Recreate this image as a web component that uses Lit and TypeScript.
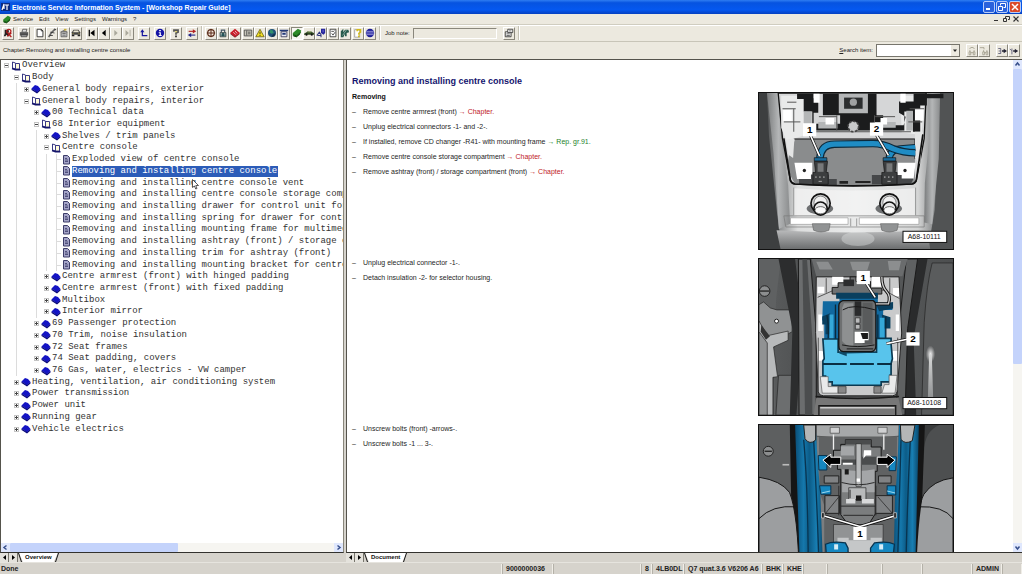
import { LitElement, html, svg, css, nothing } from "lit";
import { customElement, property } from "lit/decorators.js";
import { classMap } from "lit/directives/class-map.js";

/* Toolbar glyphs, drawn on a 12 x 12 grid. */
const glyphs: Record<string, unknown> = {
  exit: svg`<path fill="#222" d="M2 2h4l1 1v2l-1 1 2 4H6L4 8l-1 2H1l1-3z"/><circle cx="7" cy="4" r="2.5" fill="none" stroke="#b01818" stroke-width="1.4"/><path stroke="#b01818" stroke-width="1.5" d="M5 10l5-4M7 7l3 4"/>`,
  print: svg`<path fill="#555" d="M1 5h10v4H1z"/><path fill="#ddd" stroke="#333" stroke-width=".8" d="M3.5 5l1-3.500h5L8.500 5z"/><path fill="#999" stroke="#333" stroke-width=".8" d="M2.500 8h7v2.500h-7z"/>`,
  page: svg`<path fill="#fff" stroke="#222" d="M2.500 1.500h5l2 2v7h-7z"/><path fill="none" stroke="#222" d="M7.500 1.500v2h2"/>`,
  wrench: svg`<path fill="none" stroke="#666" stroke-width="2" d="M10 1L5 6 2 11"/><path stroke="#333" d="M4 5l5 1M3 9h4M9 2h2"/>`,
  home: svg`<path fill="#ccc" stroke="#555" d="M2.500 4.500h7v6h-7z"/><path fill="#777" d="M1 5l5-3 5 3z"/><path fill="#c8b040" d="M6 1h3v2H6z"/><path fill="#555" d="M4 6h4v1H4zM4 8h4v1H4z"/>`,
  car: svg`<path fill="#444" d="M1 5l2-3h6l2 3v3H1z"/><path fill="#e8e4d0" d="M3.500 3h5l1 2h-7z"/><path fill="#222" d="M1 8h3v2H1zM8 8h3v2H8z"/><path fill="#b8a830" d="M2 6h1v1H2zM9 6h1v1H9z"/>`,
  first: svg`<path fill="#000" d="M2 2h1.500v8H2zM9 2v8L4 6z"/>`,
  prev: svg`<path fill="#000" d="M8 2v8L3.500 6z"/>`,
  next: svg`<path fill="#aaa89c" d="M4 2.500v7L8 6z"/>`,
  last: svg`<path fill="#aaa89c" d="M3 2.500v7L7 6zM8 2h1v8H8z"/>`,
  back: svg`<path fill="none" stroke="#1818a0" stroke-width="1.500" d="M4 4v5h6"/><path fill="#1818a0" d="M1.500 5L4 1.500 6.500 5z"/>`,
  info: svg`<circle cx="6" cy="6" r="5" fill="#1414a4"/><path fill="#fff" d="M5 2.500h2V4H5zM4.500 5H7v3.500h1V9.500H4.500V8.500h1V6h-1z"/>`,
  help: svg`<path fill="none" stroke="#555" stroke-width="2" d="M3.500 4.500V2.500h5v2.500L6 6v2"/><path fill="#222" d="M5 9h2v2H5z"/><path fill="#d8c830" d="M5 4h2v1H5z"/>`,
  swap: svg`<path stroke="#b02020" stroke-width="1.300" d="M2 4h6"/><path fill="#b02020" d="M7 1.500L11 4 7 6.500z"/><path stroke="#222288" stroke-width="1.300" d="M4 8.500h6"/><path fill="#222288" d="M5 6L1 8.500 5 11z"/>`,
  target: svg`<circle cx="6" cy="6" r="4" fill="#f4e8dc" stroke="#5a2a18" stroke-width="1.400"/><path stroke="#5a2a18" stroke-width="1.200" d="M6 1v10M1 6h10"/>`,
  lock: svg`<path fill="none" stroke="#456" stroke-width="1.400" d="M4 5V2.500h4V5"/><path fill="#9aa" stroke="#344" d="M2.500 5.500h7v5h-7z"/><path fill="#184a50" d="M5 6h2v4H5zM3 8h6v1H3z"/>`,
  redbook: svg`<path fill="#c81c28" d="M0 6l6-5 6 5-6 5z"/><path stroke="#fff" stroke-width=".8" d="M4 5l3 3M6 3.500l2.500 3"/><path fill="none" stroke="#7a0c14" d="M0.500 7l5.500 4 5.500-4"/>`,
  panel: svg`<path fill="#c9c8bc" stroke="#444" d="M1.500 2.500h9v7h-9z"/><path stroke="#444" d="M4.500 3v6M6 5h3M6 7h3"/>`,
  warn: svg`<path fill="#f4e020" stroke="#5a5410" stroke-width=".9" d="M6 1.500L11 10.500H1z"/><path fill="#222" d="M5.500 4.500h1v3h-1zM5.500 8.500h1v1h-1z"/>`,
  globe: svg`<circle cx="6" cy="6" r="4.800" fill="#205078"/><path fill="#30906c" d="M4 2l3 1 1 3-3 1-2-2z"/><path fill="#123048" d="M7 8l3-2-1 4-4 1z"/>`,
  tray: svg`<path fill="#e8eaf4" stroke="#335" d="M2.500 4.500h7v6h-7z"/><path fill="#223a78" d="M1 2h10v2H1zM4 6h4v2H4z"/>`,
  greenbook: svg`<path fill="#2c8a28" d="M1 6l6-5 4 2-1 4-5 4-4-2z"/><path fill="none" stroke="#114a10" d="M1.500 8l4 1.500L10.500 5"/><path fill="none" stroke="#0c3a0c" d="M1.500 9.500l4 1 4-3"/>`,
  sportcar: svg`<path fill="#2f4a20" d="M0 7l3-2 2-1.500h3L10 5l2 1v2H0z"/><path fill="#c8d4a0" d="M4 5l1.500-1H8l1 1z"/><circle cx="3" cy="8" r="1.300" fill="#111"/><circle cx="9.300" cy="8" r="1.300" fill="#111"/>`,
  flag: svg`<path fill="#24249c" d="M6 1h5v5l-2 2-3-2z"/><path fill="none" stroke="#333a80" stroke-width="1.300" d="M1 9l3-4 2 3v3M2 9h4"/><path fill="#7878d8" d="M8 2h1v3H8z"/>`,
  checkpage: svg`<path fill="#fff" stroke="#333" d="M2.500 1.500h7v9h-7z"/><path fill="none" stroke="#333" d="M4 4h3l1-1M4.500 6.500l1.500 2L8.500 5"/>`,
  tools: svg`<path fill="#285a4c" d="M1 4l3-3v4l2-3h4l1 3-3 1v4H6V7l-2 4H1z"/><path stroke="#a8c8bc" stroke-width=".8" d="M3 9l5-7"/>`,
  question: svg`<path fill="#fff" stroke="#888" stroke-width=".8" d="M2 2h6v9H2z"/><path fill="none" stroke="#d4bc18" stroke-width="1.800" d="M5 4V2h4v3L7 6.500V8"/><path fill="#d4bc18" d="M6 9h2v2H6z"/>`,
  sphere: svg`<circle cx="6" cy="6" r="5" fill="#1a1a94"/><path stroke="#b8b8ec" stroke-width=".9" d="M1.500 4h9M1 6h10M1.500 8h9"/>`,
  note: svg`<path fill="#eee" stroke="#333" d="M1.500 4.500h7v6h-7z"/><path fill="#fff" stroke="#333" d="M4.500 1.500h6v4h-6z"/><path stroke="#333" stroke-width=".8" d="M3 7h4M3 9h4M6 3.500h3"/>`,
  find: svg`<path fill="none" stroke="#a09c8c" d="M3 3q3-3 6 0M3.500 5v2M8.500 5v2M2.500 7h2v3.500h-2zM7.500 7h2v3.500h-2zM4.500 8h3"/>`,
  findnext: svg`<path fill="none" stroke="#a09c8c" d="M1 2h5v2M5.500 5v2M9.500 5v2M4.500 7h2v3.500h-2zM8.500 7h2v3.500h-2zM6.500 8h2"/>`,
  textin: svg`<path stroke="#446" fill="none" stroke-width=".9" d="M1.500 3h3v6h-3M2 6h2"/><path fill="#223" d="M6 5.200h2v-2L12 6 8 8.800v-2H6z"/>`,
  textout: svg`<path stroke="#446" fill="none" stroke-width=".9" d="M1 3.500l2 2M3.500 3v7"/><path fill="#223" d="M5 5.200h2v-2L11 6 7 8.800v-2H5z"/>`,
};

const glyph = (name: string) =>
  html`<svg class="glyph" viewBox="0 0 12 12" aria-hidden="true">${glyphs[name]}</svg>`;

type Tool = [icon: string, label: string];

const mainTools: Tool[][] = [
  [["exit", "Exit"]],
  [["print", "Print"]],
  [["page", "New"], ["wrench", "Repair"], ["home", "Workshop"], ["car", "Vehicle"]],
  [["first", "First"], ["prev", "Previous"], ["next", "Next"], ["last", "Last"]],
  [["back", "Back"]],
  [["info", "Information"]],
  [["help", "Help"]],
  [["swap", "Switch"]],
];

const guideTools: Tool[] = [
  ["target", "Positions"], ["lock", "Locking"], ["redbook", "Maintenance"], ["panel", "Wiring"],
  ["warn", "Warnings"], ["globe", "Online"], ["tray", "Archive"], ["greenbook", "Repair guide"],
  ["sportcar", "Body"], ["flag", "Campaigns"], ["checkpage", "Checklist"], ["tools", "Tools"],
  ["question", "Hints"], ["sphere", "Web"],
];

type Kind = "open" | "book" | "doc";
interface Row { depth: number; kind: Kind; text: string; guides: string; selected?: boolean }

/* guides: one letter per level; "l" draws a line, "." leaves the cell blank. */
const rows: Row[] = [
  { depth: 0, kind: "open", text: "Overview", guides: "" },
  { depth: 1, kind: "open", text: "Body", guides: "." },
  { depth: 2, kind: "book", text: "General body repairs, exterior", guides: ".l" },
  { depth: 2, kind: "open", text: "General body repairs, interior", guides: ".l" },
  { depth: 3, kind: "book", text: "00 Technical data", guides: ".l." },
  { depth: 3, kind: "open", text: "68 Interior equipment", guides: ".l." },
  { depth: 4, kind: "book", text: "Shelves / trim panels", guides: ".l.l" },
  { depth: 4, kind: "open", text: "Centre console", guides: ".l.l" },
  { depth: 5, kind: "doc", text: "Exploded view of centre console", guides: ".l.ll" },
  { depth: 5, kind: "doc", text: "Removing and installing centre console", guides: ".l.ll", selected: true },
  { depth: 5, kind: "doc", text: "Removing and installing centre console vent", guides: ".l.ll" },
  { depth: 5, kind: "doc", text: "Removing and installing centre console storage comp", guides: ".l.ll" },
  { depth: 5, kind: "doc", text: "Removing and installing drawer for control unit for", guides: ".l.ll" },
  { depth: 5, kind: "doc", text: "Removing and installing spring for drawer for contr", guides: ".l.ll" },
  { depth: 5, kind: "doc", text: "Removing and installing mounting frame for multimed", guides: ".l.ll" },
  { depth: 5, kind: "doc", text: "Removing and installing ashtray (front) / storage c", guides: ".l.ll" },
  { depth: 5, kind: "doc", text: "Removing and installing trim for ashtray (front)", guides: ".l.ll" },
  { depth: 5, kind: "doc", text: "Removing and installing mounting bracket for centre", guides: ".l.ll" },
  { depth: 4, kind: "book", text: "Centre armrest (front) with hinged padding", guides: ".l.l" },
  { depth: 4, kind: "book", text: "Centre armrest (front) with fixed padding", guides: ".l.l" },
  { depth: 4, kind: "book", text: "Multibox", guides: ".l.l" },
  { depth: 4, kind: "book", text: "Interior mirror", guides: ".l.l" },
  { depth: 3, kind: "book", text: "69 Passenger protection", guides: ".l." },
  { depth: 3, kind: "book", text: "70 Trim, noise insulation", guides: ".l." },
  { depth: 3, kind: "book", text: "72 Seat frames", guides: ".l." },
  { depth: 3, kind: "book", text: "74 Seat padding, covers", guides: ".l." },
  { depth: 3, kind: "book", text: "76 Gas, water, electrics - VW camper", guides: ".l." },
  { depth: 1, kind: "book", text: "Heating, ventilation, air conditioning system", guides: "." },
  { depth: 1, kind: "book", text: "Power transmission", guides: "." },
  { depth: 1, kind: "book", text: "Power unit", guides: "." },
  { depth: 1, kind: "book", text: "Running gear", guides: "." },
  { depth: 1, kind: "book", text: "Vehicle electrics", guides: "." },
];

const kindIcon: Record<Kind, unknown> = {
  open: svg`<path fill="#fff" stroke="#3a3a84" d="M1.500 1l3 1v6l-3-1z"/><path fill="#fffbd8" stroke="#3a3a84" d="M4.500 2.500h4v5.500h-4z"/><path fill="none" stroke="#15156a" stroke-width="1.500" d="M1 7.500l3.500 1.300H9.500"/>`,
  book: svg`<path fill="#1414c4" d="M0.500 4.500L4 1l3 1 2.500 3-3.500 3.500z"/><path fill="#0a0a78" d="M0.500 4.500v1.500L6 9.500 9.500 6.500V5L6 8z"/>`,
  doc: svg`<path fill="#a4a4c8" stroke="#3c3c68" d="M2.500 0.500h4l2 2v6.500h-6z"/><path stroke="#3c3c68" stroke-width=".8" d="M4 3.500h2M4 5h3M4 6.500h3"/>`,
};

const callout = (x: number, y: number, n: number) => svg`
  <rect x=${x - 20} y=${y - 20} width="40" height="40" fill="#fff"/>
  <text x=${x} y=${y + 10} class="num">${n}</text>`;

const plate = (y: number, label: string) => svg`
  <rect x="460" y=${y} width="132" height="34" fill="#fff" stroke="#111" stroke-width="3"/>
  <text x="524" y=${y + 24} class="plate">${label}</text>`;

const connector = (x: number) => svg`
  <path fill="#3c3e3f" stroke="#111" stroke-width="2" d="M${x - 19} 230h40l-4 34h6v36h-46v-36h8z"/>
  <path fill="#77797a" d="M${x - 9} 236h18v26h-18z"/>
  <path fill="#1a6c9c" stroke="#111" stroke-width="2" d="M${x - 19} 219h38v10h-38z"/>
  <path stroke="#ddd" stroke-width="3" stroke-dasharray="4 8" d="M${x - 16} 278h34"/>
  <path stroke="#aaa" stroke-width="3" d="M${x - 6} 291h10"/>`;

const lighter = (x: number) => svg`
  <ellipse cx=${x - 2} cy="374" rx="40" ry="18" fill="#6f7173"/>
  <circle cx=${x} cy="358" r="29" fill="#cfd0d1" stroke="#111" stroke-width="5"/>
  <circle cx=${x} cy="356" r="20" fill="#f1f1f1" stroke="#555" stroke-width="2"/>
  <circle cx=${x} cy="374" r="20" fill="#e8e8e8" stroke="#111" stroke-width="5"/>
  <ellipse cx=${x} cy="379" rx="17" ry="11" fill="#fafafa" stroke="#222" stroke-width="2"/>`;

const figureOne = svg`
  <defs>
    <linearGradient id="f1a" x1="0" x2="1"><stop offset="0" stop-color="#4b4d4e"/><stop offset=".05" stop-color="#5b5d5e"/><stop offset=".12" stop-color="#9a9c9d"/><stop offset=".2" stop-color="#dcdddd"/><stop offset=".5" stop-color="#e9eaea"/><stop offset=".82" stop-color="#d4d5d5"/><stop offset=".9" stop-color="#8c8e8f"/><stop offset=".95" stop-color="#4a4c4d"/><stop offset="1" stop-color="#3b3d3e"/></linearGradient>
    <linearGradient id="f1b" x1="0" y1="0" x2="0" y2="1"><stop offset="0" stop-color="#b9babb"/><stop offset="1" stop-color="#6c6e6f"/></linearGradient>
    <linearGradient id="f1c" x1="0" x2="1"><stop offset="0" stop-color="#7a7c7d"/><stop offset=".5" stop-color="#b4b6b7"/><stop offset="1" stop-color="#8a8c8d"/></linearGradient>
  </defs>
  <rect x="25" y="22" width="586" height="475" fill="url(#f1a)"/>
  <path fill="#3d3f40" d="M25 22h24l6 130 25 240 14 105H25z"/>
  <path fill="url(#f1c)" d="M49 22h34l8 130 22 150 6 118-34 16-16-230z"/>
  <path fill="#515354" d="M572 22h39v475h-75l20-120z"/>
  <path fill="url(#f1c)" d="M536 22h36l-4 200-20 200-24-6 2-120 14-140z"/>
  <path fill="url(#f1b)" d="M78 440q222 14 456 0l8 57H90z"/>
  <ellipse cx="324" cy="466" rx="50" ry="22" fill="#e4e5e5" opacity=".4"/>
  <path fill="#d5d6d7" stroke="#111" stroke-width="4" d="M83 22l13 138 24 130q4 8 14 9 176 10 352 0 10-1 14-9l24-130 6-138z"/>
  <path fill="#e9eaea" d="M92 30h78v118l-62 20-16-40z M452 30h74l-10 120-60-8z"/>
  <path fill="#1b1c1d" d="M140 24h50v14h14v44h-14v34h80V90h-52V24h162v66h20v30h62l6-26-20-12V48h44V24h90v14h-50v22h-20v80h-22V78h-26v58H186V78h-26V40h-20z"/>
  <path fill="#b4b6b7" d="M266 24h88v60h-88zM160 78h24v58h-24zM470 76h20v60h-20zM204 110h58v20h-58zM372 110h66v18h-66z"/>
  <path fill="#2c2e2f" d="M282 36h56v34h-56z"/><circle cx="310" cy="50" r="11" fill="#9fa1a2"/>
  <path fill="#fff" d="M190 24h18v28h-18zM452 24h16v28h-16zM98 74h26v34H98zM496 70h26v36h-26zM226 98h26v20h-26zM392 98h20v20h-20z"/>
  <path stroke="#555" stroke-width="3" fill="none" d="M96 70h40M100 110h50M110 50h28M130 70v70M480 70h44M476 110h42M170 140h314M260 90v46M374 90v46M206 94h54M376 94h60"/>
  <path fill="#8a8c8d" d="M134 162h362v136q-180 10-362 0-34-50-16-90z"/>
  <path fill="none" stroke="#111" stroke-width="3" d="M130 162h366v60"/>
  <path fill="#e4e5e5" d="M106 164l26-4-4 60-14-10zM496 140h24l-8 100-16-20z"/>
  <circle cx="310" cy="124" r="16" fill="#c9cacb" stroke="#444" stroke-width="5" stroke-dasharray="8 4"/>
  <path fill="#fff" d="M132 234h54v50h-46zM444 234h54l-6 50h-48z"/>
  <circle cx="162" cy="258" r="5" fill="#222"/><circle cx="466" cy="258" r="5" fill="#222"/>
  <path fill="#46484a" d="M146 284h36v-14h54v14h24v18H146zM366 272h90v10h36l-8 18H366z"/>
  <path fill="#222" d="M268 290h26v8h-26zM316 290h46v6h-46z"/>
  <path fill="none" stroke="#0c2a3c" stroke-width="22" d="M418 220q4-26 34-28l45-4"/>
  <path fill="none" stroke="#1f8cc4" stroke-width="15" d="M418 220q4-26 34-28l45-4"/>
  <path fill="none" stroke="#0c2a3c" stroke-width="23" d="M209 220q4-42 44-42l116-2q30 0 62 16 30 12 66 12"/>
  <path fill="none" stroke="#1f8cc4" stroke-width="16" d="M209 220q4-42 44-42l116-2q30 0 62 16 30 12 66 12"/>
  ${connector(211)}${connector(419)}
  <path fill="none" stroke="#111" stroke-width="5" d="M100 160l20 128q4 10 14 11 176 12 352 0 10-1 14-11l20-140"/>
  <path fill="#f5f5f5" d="M130 312q180 14 366 0v84H130z" opacity=".7"/>
  <path fill="none" stroke="#777" stroke-width="2" d="M100 396h424v34H106zM130 310v84M498 310v84M302 404v24M320 404v24"/>
  <path fill="#fff" stroke="#999" stroke-width="2" d="M120 402h174v20H120zM328 402h180v20H328z"/>
  ${lighter(211)}${lighter(419)}
  <path fill="#919394" stroke="#666" stroke-width="2" d="M186 420h54l-4 20q-24 10-46 0zM392 420h54l-4 20q-24 10-46 0z"/>
  <path stroke="#111" stroke-width="9" d="M180 150l28 64M380 150l36 62"/>
  <path stroke="#fff" stroke-width="5" d="M180 150l28 64M380 150l36 62"/>
  ${callout(178, 134, 1)}${callout(380, 132, 2)}
  ${plate(443, "A68-10111")}`;

const figureTwo = svg`
  <defs>
    <linearGradient id="f2a" x1="0" x2="1"><stop offset="0" stop-color="#5d5f60"/><stop offset=".3" stop-color="#4b4d4e"/><stop offset=".7" stop-color="#555758"/><stop offset="1" stop-color="#4d4f50"/></linearGradient>
    <radialGradient id="f2b"><stop offset="0" stop-color="#f2f2f2"/><stop offset="1" stop-color="#5a5c5d"/></radialGradient>
    <linearGradient id="f2c" x1="0" y1="0" x2="0" y2="1"><stop offset="0" stop-color="#d8d9d9"/><stop offset="1" stop-color="#8c8e8f"/></linearGradient>
  </defs>
  <rect x="25" y="12" width="586" height="472" fill="url(#f2a)"/>
  <path fill="#5f6162" d="M25 12h66l-14 120-8 170 6 182H25z"/>
  <path fill="#909293" stroke="#222" stroke-width="2" d="M25 150l14-8 20 18 20 6h46v66l-50 28-12 44 14 60-10 8v112H25z"/>
  <path fill="#b8babb" stroke="#222" stroke-width="2" d="M25 200l26 44 62-14v28l-44 20 12 90-14 2v114H50V266l-25-34z"/>
  <path fill="#6c6e6f" stroke="#222" stroke-width="2" d="M84 364h46v120H76z"/>
  <path fill="#333" d="M32 212l26 34-12 10-16-24z"/><circle cx="78" cy="200" r="6" fill="#fff" stroke="#222" stroke-width="3"/>
  <circle cx="42" cy="109" r="16" fill="#8c8e8f" stroke="#222" stroke-width="3"/><path stroke="#222" stroke-width="4" d="M28 109h28"/>
  <path fill="#2c2d2e" d="M84 12h50l24 200-20 272h-20l8-260z"/>
  <path fill="#6b6d6e" stroke="#1a1a1a" stroke-width="3" d="M144 12h36l18 220v252h-52z"/>
  <path fill="#4b4d4e" d="M156 12h14l16 240v232h-22z"/>
  <path fill="#2a2b2c" d="M478 12h56l-42 240 8 232h-40l-2-260z"/>
  <path fill="#5f6162" stroke="#1a1a1a" stroke-width="3" d="M470 12h34l-30 210-8 262h-26l8-270z"/>
  <path fill="#5a5c5d" stroke="#222" stroke-width="2" d="M548 24q-16 60-24 180l-8 280h95V24z"/>
  <ellipse cx="543" cy="300" rx="14" ry="26" fill="url(#f2b)"/><path fill="url(#f2c)" d="M539 300h8l4 130-16 10z"/>
  <path fill="#6a6c6d" d="M184 12h290l-16 52H198z"/>
  <path fill="#8c8e8f" d="M198 20h36l14 24h-40zM300 20h60l-8 26h-44zM414 18h40l-6 28h-30z"/>
  <path fill="#c9cacb" stroke="#222" stroke-width="3" d="M198 66h250l8 170-14 178q-2 12-14 12H220q-14 0-16-12l-8-180z"/>
  <path fill="#fff" d="M246 66h34v24h-34zM366 66h28v30h-28zM202 96h20v20h-20zM430 100h18v24h-18zM204 180h14v50h-14zM438 180h10v50h-10zM204 290h18v30h-18zM428 290h18v30h-18z"/>
  <path fill="none" stroke="#555" stroke-width="3" d="M202 128l50-22h150l48 26M228 70v44M420 70v44M204 250v160M444 250v160"/>
  <path fill="#6f7172" stroke="#1a1a1a" stroke-width="3" d="M246 98h18V84h20v-6h16V66h18v14h44v20h34v18H246z"/>
  <path fill="#2c2d2e" d="M280 74h32v20h-32z"/>
  <path fill="#1169a0" d="M218 140h50v-22h116v26h44v22h-28v50h8v44H222v-62h-6z"/>
  <path fill="#0a3f5e" d="M258 114h126v18H258zM380 152l50-10v20l-42 8zM240 176l-24 10v24h10v30h12zM396 180l26 8v34h-22z"/>
  <path fill="#35a8d8" d="M238 180h12v76h-12zM390 190h14v62h-14z"/>
  <path fill="none" stroke="#0b2a3c" stroke-width="4" d="M230 182q6 26 4 70M256 150v110M384 180v80M408 186v66"/>
  <path fill="#58c4ec" stroke="#0a3850" stroke-width="5" d="M218 254h46v40h116v-42h44v18l4 44-4 14v36h-4v20h-26v10H246v-10h-20v-18h-8v-46l4-6z"/>
  <path stroke="#0a2f44" stroke-width="6" stroke-dasharray="72 10" d="M218 330h208"/>
  <path fill="#0e4a68" d="M264 292h116v4l-90 2v8l-22-8z"/>
  <path fill="#6e7071" stroke="#141414" stroke-width="4" d="M278 138h92q8 4 8 16v120q0 18-14 18h-84q-14 0-14-18V154q0-12 12-16z"/>
  <path fill="#8e9091" d="M282 146h28v128q-20 4-34-14V160z"/>
  <path fill="#595b5c" d="M338 144h30v126h-30z"/>
  <path fill="#2a2b2c" d="M314 140h20v44h-20z"/>
  <path fill="#b9babb" stroke="#222" stroke-width="2" d="M316 190h14v16h-14zM316 210h14v14h-14z"/>
  <path fill="#fff" d="M314 232h42v26h-12v8h-30z"/><path fill="#1a1a1a" d="M332 236h22v18h-16z"/>
  <path fill="none" stroke="#1a1a1a" stroke-width="3" d="M278 166q30-20 98 0M276 272q46 10 98 0M290 284h80"/>
  <path fill="none" stroke="#111" stroke-width="10" d="M396 66q0 30 14 44t6 38h-38"/>
  <path fill="none" stroke="#d0d0d0" stroke-width="4" d="M396 66q0 30 14 44t6 38h-38"/>
  <path fill="#e9eaea" stroke="#555" stroke-width="2" d="M210 368h24v30h30v20h-48zM404 392h14v-28h24l-6 54h-40z"/>
  <path fill="#888" stroke="#333" stroke-width="2" d="M264 398h24v20h-24zM372 398h22v20h-22z"/>
  <path fill="#777" d="M198 432h248l12 52H190z"/><path fill="none" stroke="#1a1a1a" stroke-width="4" d="M196 428q126 12 252 0M206 484v-28h232v28"/><path stroke="#ccc" stroke-width="4" d="M210 462h224"/>
  <path stroke="#111" stroke-width="9" d="M348 84l28 44M410 268l66-14"/>
  <path stroke="#fff" stroke-width="5" d="M348 84l28 44M410 268l66-14"/>
  ${callout(340, 68, 1)}${callout(490, 254, 2)}
  ${plate(431, "A68-10108")}`;

const figureThree = svg`
  <defs><linearGradient id="f3a" x1="0" x2="1"><stop offset="0" stop-color="#0a4f78"/><stop offset=".3" stop-color="#1578ac"/><stop offset=".5" stop-color="#0c5c88"/><stop offset=".75" stop-color="#187eb2"/><stop offset="1" stop-color="#0a486c"/></linearGradient></defs>
  <rect x="25" y="15" width="586" height="475" fill="#5d5f60"/>
  <path fill="#4d4f50" d="M500 15h111v160q-70 10-104 110z"/>
  <path fill="#9c9ea0" stroke="#151515" stroke-width="3" d="M25 174q66 10 92 46 26 60 30 270H25zM611 176q-60 8-88 50-24 40-28 264h116z"/>
  <path fill="none" stroke="#151515" stroke-width="3" d="M25 300q40-42 112-36M611 300q-30-40-106-36"/>
  <circle cx="53" cy="95" r="15" fill="#8c8e8f" stroke="#222" stroke-width="3"/><path stroke="#222" stroke-width="4" d="M42 95h22"/><path stroke="#bbb" stroke-width="5" d="M96 136h20"/>
  <path fill="#3a3c3d" d="M500 15h70q-46 20-46 80l-14 160z"/>
  <path fill="#151515" d="M118 15h30l14 475h-16q0-170-24-260zM526 15h-32l-8 475h14q2-150 18-250z"/>
  <path fill="#7c7e80" d="M200 44h246v446H200z"/>
  <path fill="#a6a8a9" stroke="#333" stroke-width="2" d="M198 15h250v34q-120 12-250 0z"/>
  <path fill="#d0d1d2" stroke="#444" stroke-width="2" d="M240 22h28v18h-28zM384 22h28v18h-28z"/>
  <path fill="#606263" d="M206 50h236l-4 440H222V260l-14-40z"/>
  <path fill="url(#f3a)" d="M134 15h62q6 120 14 200l10 275h-70z"/>
  <path fill="url(#f3a)" d="M508 15h-60q-4 130-12 220l-6 255h66z"/>
  <path fill="none" stroke="#083450" stroke-width="4" d="M160 60q14 160 14 430M190 60q10 180 18 430M482 60q-10 200-14 430M454 60q-6 200-12 430"/>
  <path fill="#b4b6b7" stroke="#222" stroke-width="3" d="M160 15h36v46q-18 16-32-4zM452 15h44l-8 48q-22 12-34-4z"/>
  <path fill="#1687c0" stroke="#083450" stroke-width="3" d="M204 108h26v44h-24zM420 112h20l-2 42h-20zM208 200h34v26h-30zM412 200h26v28h-26z"/>
  <path stroke="#9cd8f0" stroke-width="3" d="M214 222l26-6M412 216l24 6"/>
  <path stroke="#f0f0f0" stroke-width="4" d="M250 44v46M402 44v46"/>
  <path fill="#808284" stroke="#222" stroke-width="3" d="M222 170h44v22h-44zM386 170h38v22h-38zM224 230h44v54h-44zM374 230h54v54h-54z"/>
  <path fill="none" stroke="#1a1a1a" stroke-width="2" d="M226 284l40-50M428 284l-44-50"/>
  <path fill="#7b7d7e" stroke="#161616" stroke-width="3" d="M250 92h22V74h14V60h78v22h30v40h-12v34h-6v130l-20 32h-62l-22-30V150h-10v-30h-12z"/>
  <path fill="#a4a6a8" d="M272 80h40v28h-40zM276 150q50 10 98 0v70H276z"/>
  <path fill="#4a4c4d" d="M286 60h78v14h-78zM272 120h46v16h-46zM336 112h46v24h-46z"/>
  <path fill="#b8babb" stroke="#222" stroke-width="2" d="M318 72h16v130h-16zM296 206h52v36h-52z"/>
  <path fill="#fff" d="M342 92h22v16h-16l-8 10zM278 130h30v6h-30zM320 178h10v10h-10z"/>
  <path fill="#1a1a1a" d="M318 230h16v16h-16zM284 150h12v16h-12z"/>
  <path fill="#d8d9da" d="M288 240h28v14h-28zM336 240h36v14h-36z"/>
  <path fill="none" stroke="#2a2a2a" stroke-width="3" d="M274 190q52 14 100 0M270 262h106M266 200v90M378 200v90M280 290h90M300 212v26"/>
  <path fill="#919394" stroke="#2a2a2a" stroke-width="2" d="M250 318h150v56H250z"/>
  <path fill="#c5c7c8" d="M262 358h34v42h-34zM296 366h66v50h-66zM362 358h34v42h-34z"/>
  <path fill="#1687c0" stroke="#083450" stroke-width="4" d="M226 378q20-10 60-4l8 16v100h-60zM434 378q-20-10-60-4l-12 16v100h60z"/>
  <path fill="#d8eef8" d="M252 378h12v16h-12zM388 378h12v16h-12z"/>
  <path fill="#000" stroke="#fff" stroke-width="3" d="M218 122l24-18v9h30v22h-30v9zM436 122l-24-18v9h-30v22h30v9z"/>
  <path fill="none" stroke="#111" stroke-width="10" d="M222 292l108 32 104-32"/>
  <path fill="none" stroke="#fff" stroke-width="5" d="M222 292l108 32 104-32"/>
  <path fill="#222" stroke="#ddd" stroke-width="2" d="M214 282h8v16h-8zM432 282h8v16h-8z"/>
  ${callout(330, 345, 1)}`;

@customElement("tool-button")
export class ToolButton extends LitElement {
  @property() icon = "";
  @property() label = "";
  @property({ type: Boolean }) pressed = false;

  static styles = css`
    :host { display: block; }
    button {
      display: grid; place-items: center; width: 12px; height: 13px; padding: 0;
      background: #ece9df; border: 1px solid; border-color: #fff #8a877c #8a877c #fff;
    }
    .down { background: #f8f7f2; border-color: #8a877c #fff #fff #8a877c; }
    .glyph { width: 10px; height: 10px; display: block; }
  `;

  render() {
    return html`<button class=${classMap({ down: this.pressed })} aria-label=${this.label} title=${this.label}>${glyph(this.icon)}</button>`;
  }
}

@customElement("chapter-tree")
export class ChapterTree extends LitElement {
  static styles = css`
    :host { display: block; font: 9px/11px "Liberation Mono", monospace; color: #333; }
    ul { display: grid; grid-auto-rows: 1fr; height: 375px; margin: 0; padding: 0; list-style: none; }
    li { display: flex; align-items: stretch; white-space: nowrap; }
    .cell { flex: none; width: 10px; display: grid; place-items: center; }
    .line { background: linear-gradient(#dcdcdc, #dcdcdc) 5px 0 / 1px 100% no-repeat; }
    .leaf { background: linear-gradient(#dcdcdc, #dcdcdc) 5px 0 / 1px 100% no-repeat, linear-gradient(#dcdcdc, #dcdcdc) 5px 50% / 5px 1px no-repeat; }
    .toggle { display: block; width: 5px; height: 5px; padding: 0; border: 1px solid #c4c4c4; background: linear-gradient(#444, #444) center / 3px 1px no-repeat #fff; }
    .closed { background: linear-gradient(#444, #444) center / 3px 1px no-repeat, linear-gradient(#444, #444) center / 1px 3px no-repeat, #fff; }
    .icon { flex: none; align-self: center; width: 10px; height: 10px; }
    .name { align-self: center; margin-left: 1px; padding: 0 1px 0 0; color: inherit; text-decoration: none; }
    .selected { background: #2c5cb8; color: #fff; }
  `;

  render() {
    return html`<ul role="tree" aria-label="Chapters">
      ${rows.map((r) => html`<li role="treeitem" aria-level=${r.depth + 1} aria-selected=${r.selected ? "true" : "false"}>
        ${[...r.guides].map((g) => html`<span class=${classMap({ cell: true, line: g === "l" })}></span>`)}
        <span class=${classMap({ cell: true, leaf: r.kind === "doc" })}>${r.kind === "doc"
          ? nothing
          : html`<button class=${classMap({ toggle: true, closed: r.kind === "book" })} aria-label="Toggle ${r.text}"></button>`}</span>
        <svg class="icon" viewBox="0 0 10 10" aria-hidden="true">${kindIcon[r.kind]}</svg>
        <a class=${classMap({ name: true, selected: !!r.selected })} href="#">${r.text}</a>
      </li>`)}
    </ul>`;
  }
}

@customElement("repair-document")
export class RepairDocument extends LitElement {
  static styles = css`
    :host { display: block; font: 7px/9px "Liberation Sans", Arial, sans-serif; color: #1e1e1e; }
    article { padding: 15px 59px 0 5px; }
    h1 { margin: 0 0 5px; font-size: 9px; line-height: 12px; color: #14146e; }
    h2 { margin: 0; font-size: 7px; line-height: 9px; color: #111; }
    section { display: grid; grid-template-columns: 1fr 196px; align-items: start; margin-bottom: 8px; }
    .steps { display: grid; gap: 6px; }
    ul { display: grid; gap: 6px; margin: 0; padding: 0; list-style: none; }
    li { display: flex; }
    .dash { width: 11px; flex: none; }
    a { color: #c02028; text-decoration: none; }
    .group { color: #23822c; }
    .figure { display: block; width: 196px; height: 158px; border: 1px solid #111; box-sizing: border-box; }
    .num { font: bold 30px "Liberation Sans", Arial, sans-serif; text-anchor: middle; fill: #000; }
    .plate { font: 21px "Liberation Sans", Arial, sans-serif; text-anchor: middle; fill: #111; }
  `;

  private step(content: unknown) {
    return html`<li><span class="dash">–</span><span>${content}</span></li>`;
  }

  render() {
    const chapter = html`<a href="#">→ Chapter.</a>`;
    return html`<article>
      <h1>Removing and installing centre console</h1>
      <section>
        <div class="steps">
          <h2>Removing</h2>
          <ul>
            ${this.step(html`Remove centre armrest (front) ${chapter}`)}
            ${this.step("Unplug electrical connectors -1- and -2-.")}
            ${this.step(html`If installed, remove CD changer -R41- with mounting frame <a class="group" href="#">→ Rep. gr.91.</a>`)}
            ${this.step(html`Remove centre console storage compartment ${chapter}`)}
            ${this.step(html`Remove ashtray (front) / storage compartment (front) ${chapter}`)}
          </ul>
        </div>
        <svg class="figure" viewBox="25 22 586 475" preserveAspectRatio="none" role="img" aria-label="A68-10111">${figureOne}</svg>
      </section>
      <section>
        <ul>
          ${this.step("Unplug electrical connector -1-.")}
          ${this.step("Detach insulation -2- for selector housing.")}
        </ul>
        <svg class="figure" viewBox="25 12 586 472" preserveAspectRatio="none" role="img" aria-label="A68-10108">${figureTwo}</svg>
      </section>
      <section>
        <ul>
          ${this.step("Unscrew bolts (front) -arrows-.")}
          ${this.step("Unscrew bolts -1 ... 3-.")}
        </ul>
        <svg class="figure" viewBox="25 15 586 475" preserveAspectRatio="none" role="img" aria-label="Selector housing">${figureThree}</svg>
      </section>
    </article>`;
  }
}

@customElement("app-root")
export class AppRoot extends LitElement {
  static styles = css`
    :host {
      display: flex; flex-direction: column; height: 100vh; overflow: hidden; background: #ece9df; color: #222;
      font: 6px/9px "Liberation Sans", Arial, sans-serif;
    }
    button { font: inherit; color: inherit; }
    .title { display: flex; align-items: center; gap: 2px; height: 14px; flex: none; padding: 0 1px 0 1px; color: #fff;
      background: linear-gradient(#2f7df2, #0653e0 20%, #0558f0 70%, #0440c0); }
    .title h1 { flex: 1; margin: 0; font: bold 7px/9px "Liberation Sans", Arial, sans-serif; }
    .logo { width: 9px; height: 10px; }
    .win { width: 12px; height: 12px; padding: 0; display: grid; place-items: center; margin-left: -1px; border: 1px solid #b8ccf8; border-radius: 2px; background: #2a62dc; }
    .close { background: #dc4a28; }
    .win svg, .mdi svg { width: 8px; height: 8px; }
    .menu { display: flex; align-items: center; height: 10px; flex: none; padding: 0 1px 0 2px; }
    .menu button { border: 0; background: none; padding: 0; margin-right: 6px; }
    .menu .book { width: 10px; height: 9px; margin-right: 1px; }
    .menu .mdi { display: grid; place-items: center; width: 10px; height: 9px; margin: 0; }
    .space { flex: 1; }
    .bar { display: flex; align-items: center; height: 16px; flex: none; border-top: 1px solid #d0cdc0; border-bottom: 1px solid #c8c5b8; box-shadow: inset 0 1px #fff; padding-left: 2px; }
    .groups { display: flex; gap: 4px; }
    .group { display: flex; }
    .wide { flex: none; width: 171px; justify-content: space-between; }
    .sep { width: 1px; height: 14px; margin: 0 2px 0 3px; background: #c4c1b4; border-right: 1px solid #fff; }
    .job { display: flex; align-items: center; margin: 0 6px 0 2px; gap: 3px; }
    .job input { box-sizing: border-box; width: 84px; height: 11px; padding: 0 1px; font: inherit; background: #ece9df; border: 1px solid; border-color: #8a877c #fff #fff #8a877c; }
    .address { display: flex; align-items: center; height: 17px; flex: none; padding: 0 2px 0 3px; }
    .search { display: flex; align-items: center; gap: 3px; }
    .combo { display: flex; position: relative; }
    .combo select { appearance: none; box-sizing: border-box; width: 84px; height: 13px; font: inherit; background: #fff; border: 1px solid #77756c; border-radius: 0; }
    .combo svg { position: absolute; right: 1px; top: 1px; width: 8px; height: 11px; background: #ece9df; pointer-events: none; }
    .pair { display: flex; margin-left: 6px; }

    .panes { flex: 1; min-height: 0; display: grid; grid-template-columns: 344px 1fr; gap: 2px; background: #d6d3cc; border-top: 1px solid #55534c; }
    .pane { display: flex; flex-direction: column; min-width: 0; min-height: 0; }
    .view { position: relative; flex: 1; min-height: 0; overflow: hidden; display: flex; background: #fff; border-left: 1px solid #55534c; border-bottom: 1px solid #33322e; }
    .stack { flex-direction: column; border-right: 1px solid #8a877c; }
    .content { flex: 1; min-width: 0; min-height: 0; overflow: hidden; }
    .cursor { position: absolute; left: 191px; top: 119px; width: 7px; height: 11px; }
    .scroll { flex: none; display: flex; background: #f6f5f1; }
    .scroll svg { flex: none; width: 9px; height: 9px; background: #dfe7fd; }
    .scroll.v { flex-direction: column; width: 9px; }
    .scroll.h { height: 9px; }
    .thumb { background: #c4d3fb; border-radius: 1px; }
    .h .thumb { width: 49%; }
    .v .thumb { height: 60%; }

    .tabs { display: flex; height: 9px; flex: none; font: bold 6px/9px "Liberation Sans", Arial, sans-serif; color: #111; }
    .tabs button { padding: 0; border: 0; background: none; }
    .tabs .nav { display: grid; place-items: center; width: 9px; box-sizing: border-box; border-right: 1px solid #77756c; background: #e4e2dc; }
    .nav svg { width: 5px; height: 5px; }
    .tabs .tab { padding: 0 6px; background: #fff; clip-path: polygon(0 0, 100% 0, calc(100% - 4px) 100%, 4px 100%); }
    .edge { width: 4px; height: 9px; margin: 0 -3px; z-index: 1; }
    .nav + .edge { margin-left: 0; }

    .status { display: flex; align-items: center; height: 11px; flex: none; background: #d6d3cc; border-top: 1px solid #e6e4de; font: bold 7px/9px "Liberation Sans", Arial, sans-serif; color: #222; white-space: nowrap; }
    .status span { box-sizing: border-box; height: 10px; padding: 0 3px; border-left: 1px solid #b4b1a8; border-right: 1px solid #f0eee8; overflow: hidden; }
    .status .msg { flex: 1; border-left: 0; padding-left: 1px; }
  `;

  private arrow(dir: "left" | "right" | "up" | "down") {
    const d = { left: "M5.500 2.500L3 4.500 5.500 6.500", right: "M3.500 2.500L6 4.500 3.500 6.500", up: "M2.500 5.500L4.500 3 6.500 5.500", down: "M2.500 3.500L4.500 6 6.500 3.500" }[dir];
    return html`<svg viewBox="0 0 9 9" aria-hidden="true"><path fill="none" stroke="#38508c" stroke-width="1.500" d=${d} /></svg>`;
  }

  private tabs(name: string) {
    return html`<div class="tabs">
      <button class="nav" aria-label="Previous tab"><svg viewBox="0 0 5 5"><path d="M4 0v5L1 2.500z" /></svg></button>
      <button class="nav" aria-label="Next tab"><svg viewBox="0 0 5 5"><path d="M1 0v5l3-2.500z" /></svg></button>
      <svg class="edge" viewBox="0 0 4 9" aria-hidden="true"><path stroke="#111" d="M0.500 0l3 9" /></svg>
      <button class="tab">${name}</button>
      <svg class="edge" viewBox="0 0 4 9" aria-hidden="true"><path stroke="#111" d="M3.500 0l-3 9" /></svg>
    </div>`;
  }

  private tool([icon, label]: Tool) {
    return html`<tool-button .icon=${icon} .label=${label} ?pressed=${icon === "greenbook"}></tool-button>`;
  }

  render() {
    const cells: [number, string][] = [
      [51, "9000000036"], [88, ""], [11, "8"], [32, "4LB0DL"], [78, "Q7 quat.3.6 V6206 A6"], [21, "BHK"], [20, "KHE"],
      [24, ""], [55, ""], [40, ""], [50, ""], [30, "ADMIN"], [20, ""],
    ];
    return html`
      <header class="title">
        <svg class="logo" viewBox="0 0 9 10" aria-hidden="true"><path fill="#0a2a80" d="M0 1h9v8H0z"/><path stroke="#fff" stroke-width="1.200" fill="none" d="M1 8l2-6v5M4 3h4M6 3v5"/></svg>
        <h1>Electronic Service Information System - [Workshop Repair Guide]</h1>
        <button class="win" aria-label="Minimize"><svg viewBox="0 0 8 8"><path fill="#fff" d="M1 5h4v2H1z"/></svg></button>
        <button class="win" aria-label="Restore"><svg viewBox="0 0 8 8"><path fill="none" stroke="#fff" d="M2.500 2.500v-2h5v4h-2M0.500 3.500h4v4h-4z"/></svg></button>
        <button class="win close" aria-label="Close"><svg viewBox="0 0 8 8"><path stroke="#fff" stroke-width="1.500" d="M1 1l6 6M7 1L1 7"/></svg></button>
      </header>
      <nav class="menu">
        <svg class="book" viewBox="0 0 12 12" aria-hidden="true">${glyphs.greenbook}</svg>
        ${["Service", "Edit", "View", "Settings", "Warnings", "?"].map((m) => html`<button>${m}</button>`)}
        <span class="space"></span>
        <button class="mdi" aria-label="Minimize document"><svg viewBox="0 0 8 8"><path fill="#333" d="M2 5h4v1H2z"/></svg></button>
        <button class="mdi" aria-label="Restore document"><svg viewBox="0 0 8 8"><path fill="none" stroke="#333" d="M3.500 3V1.500h4v3H6M1.500 3.500h3v3h-3z"/></svg></button>
        <button class="mdi" aria-label="Close document"><svg viewBox="0 0 8 8"><path stroke="#333" stroke-width="1.200" d="M1.500 1.500l5 5M6.500 1.500l-5 5"/></svg></button>
      </nav>
      <div class="bar">
        <div class="groups">${mainTools.map((g) => html`<div class="group">${g.map((t) => this.tool(t))}</div>`)}</div>
        <span class="sep"></span>
        <div class="group wide">${guideTools.map((t) => this.tool(t))}</div>
        <span class="sep"></span>
        <label class="job">Job note: <input type="text" /></label>
        ${this.tool(["note", "Edit note"])}
        <span class="sep"></span>
      </div>
      <div class="address">
        <span>Chapter:Removing and installing centre console</span>
        <span class="space"></span>
        <div class="search">
          <label for="search"><u>S</u>earch item:</label>
          <span class="combo">
            <select id="search"><option></option></select>
            <svg viewBox="0 0 8 11" aria-hidden="true"><path fill="#222" d="M2 4.500h4L4 7z"/></svg>
          </span>
        </div>
        <div class="pair">${this.tool(["find", "Find"])}${this.tool(["findnext", "Find next"])}</div>
        <div class="pair">${this.tool(["textin", "Larger"])}${this.tool(["textout", "Smaller"])}</div>
      </div>
      <main class="panes">
        <div class="pane">
          <div class="view stack">
            <chapter-tree class="content"></chapter-tree>
            <div class="scroll h">${this.arrow("left")}<span class="thumb"></span><span class="space"></span>${this.arrow("right")}</div>
            <svg class="cursor" viewBox="0 0 7 11" aria-hidden="true"><path fill="#fff" stroke="#333" stroke-width=".8" d="M0.500 0.500v8l2-1.500 1.200 3 1.300-.5L3.800 6.500h2.700z"/></svg>
          </div>
          ${this.tabs("Overview")}
        </div>
        <div class="pane">
          <div class="view">
            <repair-document class="content"></repair-document>
            <div class="scroll v">${this.arrow("up")}<span class="thumb"></span><span class="space"></span>${this.arrow("down")}</div>
          </div>
          ${this.tabs("Document")}
        </div>
      </main>
      <footer class="status">
        <span class="msg">Done</span>
        ${cells.map(([w, t]) => html`<span style=${`width:${w}px`}>${t}</span>`)}
      </footer>
    `;
  }
}
